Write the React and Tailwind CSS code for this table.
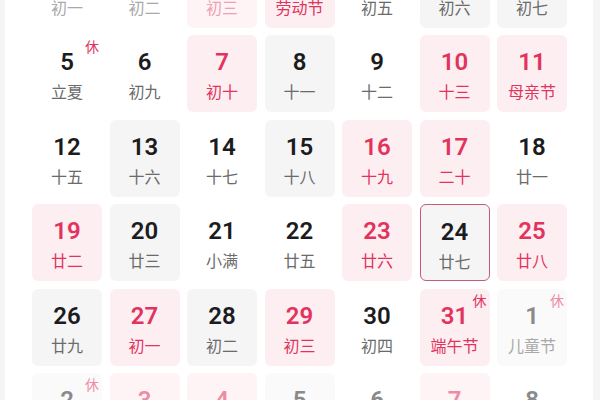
import React from "react";

const BG = {
  none: "",
  pink: "bg-[#fdeef2]",
  gray: "bg-[#f5f5f6]",
  faint: "bg-[#fafafb]",
  faintPink: "bg-[#fef4f6]",
};

const NUM = {
  normal: "text-[#1c1c1e]",
  red: "text-[#e2335d]",
  fade: "text-[#8a8a8a]",
  fadeRed: "text-[#ef8ba5]",
};

const LUN = {
  normal: "text-[#6b6b6b]",
  red: "text-[#e2335d]",
  fade: "text-[#a9a9a9]",
  fadeRed: "text-[#efa0b4]",
};

const BADGE = {
  red: "text-[#e2335d]",
  fade: "text-[#f08ca5]",
};

const rows = [
  [
    { n: 28, l: "初一", bg: "none", t: "fade" },
    { n: 29, l: "初二", bg: "none", t: "fade" },
    { n: 30, l: "初三", bg: "faintPink", t: "fadeRed" },
    { n: 1, l: "劳动节", bg: "pink", t: "red" },
    { n: 2, l: "初五", bg: "none", t: "normal" },
    { n: 3, l: "初六", bg: "gray", t: "normal" },
    { n: 4, l: "初七", bg: "gray", t: "normal" },
  ],
  [
    { n: 5, l: "立夏", bg: "none", t: "normal", badge: "red" },
    { n: 6, l: "初九", bg: "none", t: "normal" },
    { n: 7, l: "初十", bg: "pink", t: "red" },
    { n: 8, l: "十一", bg: "gray", t: "normal" },
    { n: 9, l: "十二", bg: "none", t: "normal" },
    { n: 10, l: "十三", bg: "pink", t: "red" },
    { n: 11, l: "母亲节", bg: "pink", t: "red" },
  ],
  [
    { n: 12, l: "十五", bg: "none", t: "normal" },
    { n: 13, l: "十六", bg: "gray", t: "normal" },
    { n: 14, l: "十七", bg: "none", t: "normal" },
    { n: 15, l: "十八", bg: "gray", t: "normal" },
    { n: 16, l: "十九", bg: "pink", t: "red" },
    { n: 17, l: "二十", bg: "pink", t: "red" },
    { n: 18, l: "廿一", bg: "none", t: "normal" },
  ],
  [
    { n: 19, l: "廿二", bg: "pink", t: "red" },
    { n: 20, l: "廿三", bg: "gray", t: "normal" },
    { n: 21, l: "小满", bg: "none", t: "normal" },
    { n: 22, l: "廿五", bg: "none", t: "normal" },
    { n: 23, l: "廿六", bg: "pink", t: "red" },
    { n: 24, l: "廿七", bg: "gray", t: "normal", sel: true },
    { n: 25, l: "廿八", bg: "pink", t: "red" },
  ],
  [
    { n: 26, l: "廿九", bg: "gray", t: "normal" },
    { n: 27, l: "初一", bg: "pink", t: "red" },
    { n: 28, l: "初二", bg: "gray", t: "normal" },
    { n: 29, l: "初三", bg: "pink", t: "red" },
    { n: 30, l: "初四", bg: "none", t: "normal" },
    { n: 31, l: "端午节", bg: "pink", t: "red", badge: "red" },
    { n: 1, l: "儿童节", bg: "faint", t: "fade", badge: "fade" },
  ],
  [
    { n: 2, l: "初七", bg: "faint", t: "fade", badge: "fade" },
    { n: 3, l: "初八", bg: "faintPink", t: "fadeRed" },
    { n: 4, l: "初九", bg: "faintPink", t: "fadeRed" },
    { n: 5, l: "芒种", bg: "faint", t: "fade" },
    { n: 6, l: "十一", bg: "none", t: "fade" },
    { n: 7, l: "十二", bg: "faintPink", t: "fadeRed" },
    { n: 8, l: "十三", bg: "none", t: "fade" },
  ],
];

function Cell({ c }) {
  return (
    <div
      className={`relative h-[77px] rounded-[6px] flex flex-col items-center pt-[13px] ${BG[c.bg]} ${
        c.sel ? "border-[1.5px] border-[#c95a76] pt-[11.5px]" : ""
      }`}
    >
      <div
        className={`leading-[28px] text-[24px] font-semibold ${NUM[c.t]}`}
        style={{ fontFamily: "Roboto, 'Noto Sans', sans-serif" }}
      >
        {c.n}
      </div>
      <div
        className={`mt-[5px] leading-[20px] text-[16px] ${LUN[c.t]}`}
        style={{ fontFamily: "'Noto Sans CJK SC', 'Noto Sans', sans-serif" }}
      >
        {c.l}
      </div>
      {c.badge && (
        <div
          className={`absolute top-[2px] right-[3px] text-[14px] leading-[18px] ${BADGE[c.badge]}`}
          style={{ fontFamily: "'Noto Sans CJK SC', sans-serif" }}
        >
          休
        </div>
      )}
    </div>
  );
}

export default function App() {
  return (
    <div className="w-[600px] h-[400px] overflow-hidden flex bg-white">
      <div className="w-[5px] shrink-0 bg-[#f5f5f6]" />
      <div className="w-[588px] shrink-0 bg-white overflow-hidden">
        <div className="ml-[27px] mt-[-49.5px] grid grid-cols-[repeat(7,70px)] gap-x-[7.5px] gap-y-[7.5px]">
          {rows.map((r, i) =>
            r.map((c, j) => <Cell key={`${i}-${j}`} c={c} />)
          )}
        </div>
      </div>
      <div className="w-[7px] shrink-0 bg-[#f5f5f6]" />
    </div>
  );
}
